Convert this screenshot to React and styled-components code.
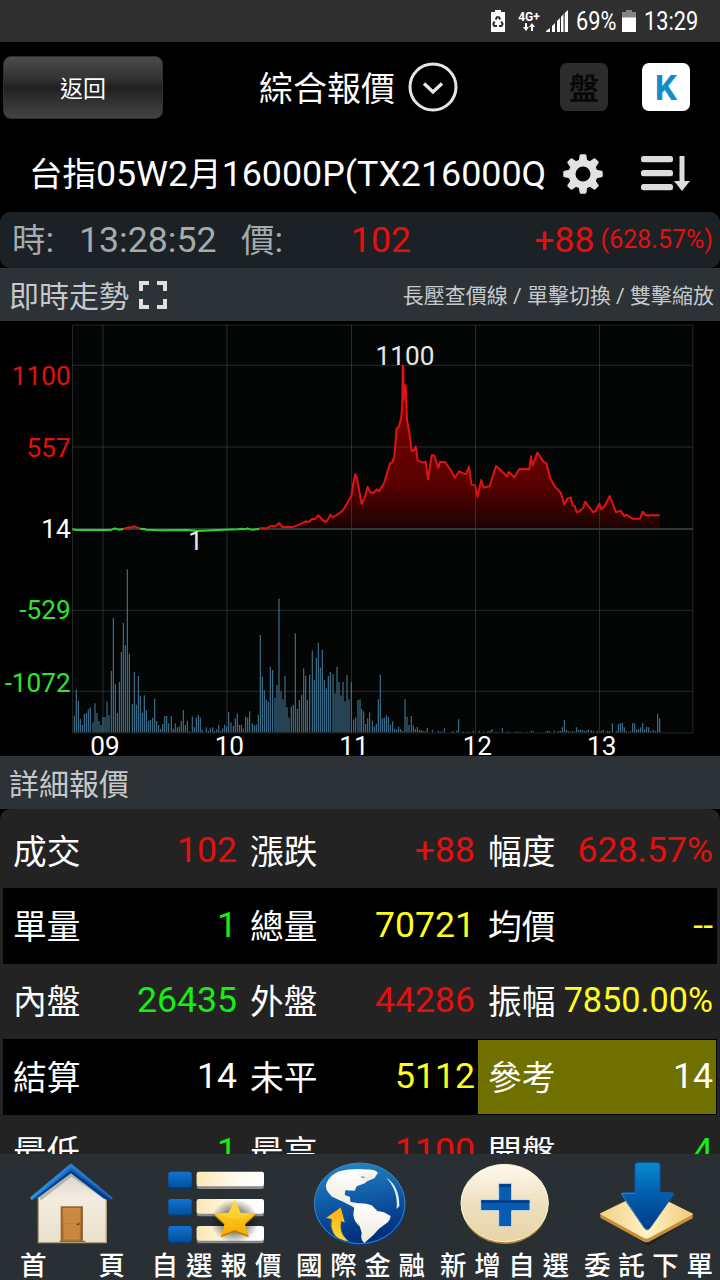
import styled, { createGlobalStyle } from 'styled-components';

const RED = '#e60f0f';
const GREEN = '#14f014';
const YELLOW = '#ffff1e';
const WHITE = '#fff';

const detailRows = [
    [['成交', '102', RED], ['漲跌', '+88', RED], ['幅度', '628.57%', RED]],
    [['單量', '1', GREEN], ['總量', '70721', YELLOW], ['均價', '--', YELLOW]],
    [['內盤', '26435', GREEN], ['外盤', '44286', RED], ['振幅', '7850.00%', YELLOW]],
    [['結算', '14', WHITE], ['未平', '5112', YELLOW], ['參考', '14', WHITE, true]],
    [['最低', '1', GREEN], ['最高', '1100', RED], ['開盤', '4', GREEN]],
];

// Chart units: three per pixel.
const priceAxis = [
    ['1100', 192, RED],
    ['557', 408, RED],
    ['14', 651, WHITE],
    ['-529', 894, '#2ce62c'],
    ['-1072', 1112, '#2ce62c'],
];
const hourAxis = [['09', 315], ['10', 688], ['11', 1062], ['12', 1432], ['13', 1805]];
const gridColumns = [309, 681, 1054.5, 1426.5, 1798.5];
const gridRows = [133, 378, 868, 1111];

const openLine = '217,628 230,630 320,630 335,629 345,625 357,629 370,627';
const earlyRise = '370,627 385,622 394,623 402,619 410,622 420,625';
const morningLine = '420,626 432,627 440,629 460,630 480,631 560,630 595,633 650,630 715,628 725,626 732,628 742,625 755,629 778,627';
const rally =
    '778,625 800,625 812,618 826,619 837,609 848,622 863,620 875,622 900,613 917,604 927,606 937,596 944,598 955,586 965,597 973,605 981,603 991,584 998,592 1015,582 1030,570 1045,543 1054,527 1060,490 1066,462 1071,475 1080,525 ' +
    '1085,552 1095,530 1103,500 1110,517 1120,519 1130,508 1137,514 1152,490 1170,430 1177,427 1183,410 1190,325 1197,320 1204,290 1207,250 1208,137 1210,137 1211,240 1214,195 1217,197 1221,300 1229,345 1235,393 1241,392 1247,380 1253,421 1270,428 1277,425 1284,478 1295,406 1302,406 1315,443 1320,426 1335,426 1352,450 1365,473 1377,454 1398,463 1407,440 1414,493 1426,497 1432,530 1444,480 1451,503 1469,498 1488,438 1510,458 1520,470 1526,456 1543,472 1558,447 1588,448 1593,409 1598,437 1612,398 1630,425 1639,430 1651,475 1665,500 1682,518 1693,553 1702,536 1712,532 1718,556 1724,558 1730,577 1740,573 1750,563 1755,545 1780,577 1788,572 1798,551 1804,568 1816,555 1829,528 1848,577 1862,572 1873,589 1878,584 1898,596 1920,596 1928,575 1938,586 1979,586';

const VOLUME_BASE = 547;
const volumeTops =
    '223:497 229:418 235:453 241:507 247:525 253:492 259:489 265:478 271:472 279:517 285:460 291:489 297:513 303:525 309:501 315:501 321:455 327:495 334:363 340:204 346:402 352:489 358:396 364:306 370:219 376:286 382:58 388:312 397:462 403:366 409:464 415:378 421:437 427:488 433:436 439:480 445:513 451:510 458:503 464:446 470:513 476:525 482:537 488:522 494:498 500:498 506:520 514:498 520:536 526:520 532:532 538:530 544:513 550:480 556:525 562:512 568:543 577:500 583:532 589:503 595:495 601:503 607:540 619:532 625:542 631:535 638:532 644:543 650:538 656:524 662:543 668:535 674:525 680:530 686:486 693:517 700:528 706:505 712:490 718:525 724:525 730:535 737:500 743:503 749:484 757:520 763:526 769:524 775:494 ' +
    '781:255 787:380 793:420 799:448 805:455 811:350 818:360 825:443 831:405 837:146 843:424 849:448 855:378 861:472 867:503 874:470 880:465 886:250 892:477 898:450 905:435 911:355 917:378 922:450 929:374 937:302 943:390 949:324 955:278 961:352 967:300 973:390 979:415 985:378 991:366 999:372 1005:430 1011:350 1017:396 1023:436 1029:396 1035:454 1041:375 1047:448 1054:396 1061:508 1067:503 1074:450 1080:448 1085:477 1091:484 1097:522 1103:505 1109:487 1117:512 1123:529 1129:521 1135:448 1141:374 1147:505 1153:503 1159:495 1165:501 1171:524 1178:514 1184:536 1190:538 1196:530 1202:537 1208:543 1215:448 1221:500 1227:525 1234:498 1240:526 1246:537 1252:531 1258:540 1264:540 1270:543 1276:543 1282:534 ' +
    '1297:540 1315:543 1321:545 1327:545 1333:535 1358:543 1370:542 1376:508 1390:545 1405:545 1420:542 1438:543 1452:545 1464:543 1470:543 1476:537 1488:545 1507:534 1520:545 1526:545 1545:545 1551:545 1557:545 1563:545 1580:545 1594:542 1600:544 1638:544 1643:543 1648:543 1663:542 1675:543 1681:543 1687:532 1693:510 1699:540 1705:543 1712:545 1718:543 1724:545 1730:532 1736:540 1742:540 1748:540 1754:543 1760:542 1766:538 1774:541 1780:543 1792:543 1804:543 1810:540 1822:543 1828:543 1837:520 1849:543 1855:522 1861:519 1867:519 1873:532 1879:543 1891:543 1898:519 1904:520 1910:538 1916:538 1922:532 1928:519 1934:538 1940:531 1946:532 1952:543 1960:540 1966:543 1973:492 1979:505';
const volumes = volumeTops.split(' ').map(bar => bar.split(':').map(Number));

const BatterySaverIcon = () => (
    <svg width="16" height="22" viewBox="0 0 16 22">
        <path d="M1 2h4V0h6v2h4v20H1z" fill="#fff" />
        <g fill="none" stroke="#2f2f2f" strokeWidth="2">
            <path d="M5.6 9.6 7 7.2h2l1.3 2.2" />
            <path d="M11.3 11.4 12.6 14l-1 1.9H9" />
            <path d="M7 15.9H4.2L3.3 14l1.3-2.4" />
        </g>
    </svg>
);

const DataArrowsIcon = () => (
    <svg width="12" height="8" viewBox="0 0 12 8">
        <path d="M2 0h2v4h2L3 8 0 4h2zM8 8V4H6l3-4 3 4h-2v4z" fill="#fff" />
    </svg>
);

const SignalIcon = () => (
    <svg width="22" height="22" viewBox="0 0 22 22">
        <path d="M0 22v-1l4-3v4zM6 22v-6l3-3v9zM11 22V11l3-3v14zM15 22V7l2.500-3v18zM18.700 22V3L22 0v22z" fill="#fff" />
    </svg>
);

const BatteryIcon = () => (
    <svg width="14" height="22" viewBox="0 0 14 22">
        <path d="M0 2h4V0h6v2h4v6H0z" fill="#858585" />
        <path d="M0 7.500h14V22H0z" fill="#fff" />
    </svg>
);

const DropdownIcon = () => (
    <svg width="50" height="50" viewBox="0 0 50 50" fill="none" stroke="#e6e6e6">
        <circle cx="25" cy="25" r="23" strokeWidth="3" />
        <path d="m16 21.500 9 8.500 9-8.500" strokeWidth="3.400" />
    </svg>
);

const GearIcon = () => (
    <svg width="40" height="40" viewBox="-20 -20 40 40">
        <circle r="11" fill="none" stroke="#e2e2e2" strokeWidth="7" />
        {[0, 45, 90, 135, 180, 225, 270, 315].map(angle => (
            <path key={angle} d="M-4.500-12-3.300-18.700Q-3-19.700-2-19.700H2Q3-19.700 3.300-18.700L4.500-12z" fill="#e2e2e2" transform={`rotate(${angle})`} />
        ))}
    </svg>
);

const SortIcon = () => (
    <svg width="50" height="36" viewBox="0 0 50 36" fill="#dcdcdc">
        <rect y="0" width="32" height="6.200" rx="2.500" />
        <rect y="14" width="32" height="6.200" rx="2.500" />
        <rect y="28" width="32" height="6.200" rx="2.500" />
        <path d="M38.500 0h5v25H49l-8 10-8-10h5.500z" />
    </svg>
);

const ExpandIcon = () => (
    <svg width="28" height="28" viewBox="0 0 28 28" fill="none" stroke="#dedede" strokeWidth="4">
        <path d="M2 10V2h8M18 2h8v8M26 18v8h-8M10 26H2v-8" />
    </svg>
);

const HomeIcon = () => (
    <NavIcon viewBox="0 132 432 294">
        <defs>
            <linearGradient id="roof" x2="1"><stop stopColor="#2487db" /><stop offset=".5" stopColor="#1268bd" /><stop offset="1" stopColor="#033e8d" /></linearGradient>
            <linearGradient id="wall" x2="0" y2="1"><stop stopColor="#d6d1c9" /><stop offset=".4" stopColor="#f4ece0" /><stop offset="1" stopColor="#e9e0cc" /></linearGradient>
            <linearGradient id="door" x2="0" y2="1"><stop stopColor="#c98a45" /><stop offset="1" stopColor="#b2702a" /></linearGradient>
        </defs>
        <path d="M115 262 213 180l106 82v136H115z" fill="url(#wall)" stroke="#a99e80" strokeWidth="4" />
        <path d="M122 272 214 200l98 66v-20l-98-68-98 74z" fill="#948e84" opacity=".55" />
        <path d="m213 160 125 103-8 9-18-6-99-76-100 75-20 6-2-9z" fill="url(#roof)" />
        <path d="m213 160 125 103-2 6-123-97-119 96-3-6z" fill="#4b9ae0" opacity=".45" />
        <path d="m213 181 117 89-9-1-108-80-108 79-8 1z" fill="#003a83" />
        <path d="M182 289h66v103h8v4h-77v-4h3z" fill="#9b642f" />
        <path d="M188 294h54v98h-54z" fill="url(#door)" />
        <path d="M193 300h45v38h-45zM193 343h45v44h-45z" fill="#c8883f" stroke="#d09450" strokeWidth="1.500" />
        <path d="M246 289v103" stroke="#80501f" strokeWidth="3" />
        <circle cx="234" cy="341" r="5" fill="#774719" /><circle cx="233" cy="339" r="2" fill="#f5d18d" />
    </NavIcon>
);

const WatchlistIcon = () => (
    <NavIcon viewBox="432 132 432 294">
        <defs>
            <linearGradient id="tile" x2="0" y2="1"><stop stopColor="#1274cf" /><stop offset="1" stopColor="#044f9f" /></linearGradient>
            <linearGradient id="bar" x2="1"><stop stopColor="#fbe7b4" /><stop offset=".6" stopColor="#fffaf0" /><stop offset="1" stopColor="#fff" /></linearGradient>
            <linearGradient id="star" x2="0" y2="1"><stop stopColor="#ffdc37" /><stop offset="1" stopColor="#f7a900" /></linearGradient>
            <radialGradient id="starShadow"><stop offset=".5" stopOpacity=".45" /><stop offset="1" stopOpacity="0" /></radialGradient>
        </defs>
        {[185, 267, 348].map(y => (
            <g key={y}>
                <rect x="505" y={y} width="70" height="52" rx="8" fill="#023a7b" />
                <rect x="505" y={y} width="70" height="47" rx="8" fill="url(#tile)" />
                <rect x="590" y={y + 2} width="202" height="50" rx="7" fill="#898989" />
                <rect x="590" y={y} width="202" height="44" rx="7" fill="url(#bar)" />
            </g>
        ))}
        <ellipse cx="704" cy="334" rx="72" ry="66" fill="url(#starShadow)" />
        <path d="m704 274 18 39 45 3-33 30 12 36-42-17-41 17 11-36-33-30 45-3z" fill="#b97900" />
        <path d="m704 269 18 39 45 3-33 30 12 36-42-17-41 17 11-36-33-30 45-3z" fill="url(#star)" />
        <path d="m704 269 18 39 45 3-62 17-64-17 45-3z" fill="#ffe14e" opacity=".35" />
    </NavIcon>
);

const GlobeIcon = () => (
    <NavIcon viewBox="864 132 432 294">
        <defs>
            <linearGradient id="ocean" x2=".2" y2="1"><stop stopColor="#2789c8" /><stop offset=".45" stopColor="#1261aa" /><stop offset="1" stopColor="#002f7e" /></linearGradient>
            <linearGradient id="land" x2="0" y2="1"><stop stopColor="#fff" /><stop offset="1" stopColor="#eee9dc" /></linearGradient>
            <linearGradient id="turn" x2="0" y2="1"><stop stopColor="#ffad11" /><stop offset="1" stopColor="#ffda31" /></linearGradient>
        </defs>
        <ellipse cx="1080" cy="284" rx="138" ry="122" fill="#073d86" />
        <ellipse cx="1079" cy="280" rx="136" ry="121" fill="url(#ocean)" stroke="#3787c0" strokeWidth="3" />
        <path d="M1018 184q40-10 86-5l-17 12-5 11 29 4-17 14-24 9-6 13-28-1-2 14 16 6 1 14 24 5 7 8-8 12-20-12-28-14-30-14-12-14q-10-14-4-28 12-24 38-34z" fill="url(#land)" />
        <path d="M1096 179q26-3 38 9l-11 17-22 9-14-4 8-9-20-3 7-12z" fill="url(#land)" />
        <path d="M1064 281q28-4 51 5 10 10 17 17l20 4 20 11q-2 16-17 25l-18 13-17 19-27 24q-13-11-8-31l-6-19q-17-14-19-35z" fill="url(#land)" />
        <path d="M1158 202q41 28 40 86l-8 9q5-55-32-95z" fill="#def0f7" />
        <path d="m1023 290 13 49-12-4q-4 27 8 43 8 13 20 18-42-4-53-27-10-18-5-41l-19-3z" fill="url(#turn)" stroke="#165691" strokeWidth="3" />
    </NavIcon>
);

const AddIcon = () => (
    <NavIcon viewBox="216 132 432 294">
        <defs>
            <linearGradient id="coin" x2="0" y2="1"><stop stopColor="#fffaf0" /><stop offset=".5" stopColor="#eee0bf" /><stop offset="1" stopColor="#e7d4a6" /></linearGradient>
        </defs>
        <ellipse cx="434" cy="284" rx="131" ry="118" fill="#ad8a3d" />
        <ellipse cx="434" cy="279" rx="131" ry="116" fill="url(#coin)" stroke="#f9f3df" strokeWidth="3" />
        <path d="M416 220h39v49h55v33h-55v48h-39v-48h-54v-33h54z" fill="#085bb2" stroke="#d2dce0" strokeWidth="3" />
        <path d="M418 223h35v8h-35zM364 271h144v8H364z" fill="#003f8c" />
    </NavIcon>
);

const OrderIcon = () => (
    <NavIcon viewBox="648 132 432 294">
        <defs>
            <linearGradient id="tray" x2="1"><stop stopColor="#f0cf83" /><stop offset=".5" stopColor="#fff1c4" /><stop offset="1" stopColor="#f0cb78" /></linearGradient>
            <linearGradient id="arrow" x2="0" y2="1"><stop stopColor="#078bd0" /><stop offset=".4" stopColor="#0263b3" /><stop offset="1" stopColor="#003b87" /></linearGradient>
        </defs>
        <path d="M722 318 860 394l142-74-137 88z" fill="#171b1d" opacity=".7" />
        <path d="m721 311 139-68 138 69v13l-130 70q-8 4-17 0L721 323z" fill="#c2903d" />
        <path d="m721 311 139-68 138 69-130 71q-8 3-17 0z" fill="url(#tray)" stroke="#f9df9d" strokeWidth="2" />
        <path d="M825 166q0-8 8-8h58q9 0 9 8v82h35q9 0 4 8l-69 98q-8 11-17 0l-67-98q-5-8 5-8h34z" fill="url(#arrow)" stroke="#15589b" strokeWidth="3" />
        <path d="m827 250-42 1 68 103q8 9 16 1" fill="none" stroke="#69a1c6" strokeWidth="2" opacity=".7" />
    </NavIcon>
);

const navItems = [
    ['首頁', HomeIcon, 105],
    ['自選報價', WatchlistIcon, 130],
    ['國際金融', GlobeIcon, 129],
    ['新增自選', AddIcon, 129],
    ['委託下單', OrderIcon, 129],
];

const TrendChart = () => (
    <Chart viewBox="0 0 2160 1305">
        <defs>
            <linearGradient id="fall" gradientUnits="userSpaceOnUse" x1="0" y1="137" x2="0" y2="624">
                <stop stopColor="#850000" />
                <stop offset=".72" stopColor="#5a0000" />
                <stop offset="1" stopColor="#1d0303" />
            </linearGradient>
        </defs>
        <rect x="217.500" y="12" width="1861" height="1224" fill="#040606" stroke="#222626" strokeWidth="3" />
        <g transform="translate(0 -3)">
            <polygon points={`778,624 ${rally} 1979,624`} fill="url(#fall)" />
        </g>
        <g stroke="#8c9696" strokeOpacity=".25" strokeWidth="3">
            {gridColumns.map(x => <path key={x} d={`M${x} 12V1236`} />)}
            {gridRows.map(y => <path key={y} d={`M217 ${y}H2079`} />)}
        </g>
        <path d="M217 624H2079" stroke="#3d474f" strokeWidth="5" />
        <g transform="translate(0 -3)" fill="none" strokeWidth="6" strokeLinejoin="round">
            <polyline points={openLine} stroke="#28d828" />
            <polyline points={earlyRise} stroke="#dc1818" />
            <polyline points={morningLine} stroke="#28d828" />
            <polyline points={rally} stroke="#e01212" />
        </g>
        <g transform="translate(0 687)" fill="#40728f">
            {volumes.map(([x, top]) => (
                <rect key={x} x={x - 1.7} y={top} width="3.400" height={VOLUME_BASE - top} />
            ))}
        </g>
        <AxisText x="1215" y="132" textAnchor="middle" fill="#e8e8e8">1100</AxisText>
        <AxisText x="587" y="686" textAnchor="middle" fill="#e8e8e8">1</AxisText>
        {priceAxis.map(([label, y, color]) => (
            <AxisText key={label} x="212" y={y} textAnchor="end" fill={color}>{label}</AxisText>
        ))}
        {hourAxis.map(([label, x]) => (
            <AxisText key={label} x={x} y="1301" textAnchor="middle" fill="#fff">{label}</AxisText>
        ))}
    </Chart>
);

const App = () => (
    <>
        <GlobalStyle />
        <Screen>
            <StatusBar>
                <BatterySaverIcon />
                <Network>
                    <span>4G+</span>
                    <DataArrowsIcon />
                </Network>
                <SignalIcon />
                <StatusText width="40px">69%</StatusText>
                <BatteryIcon />
                <StatusText width="56px">13:29</StatusText>
            </StatusBar>

            <Header>
                <BackButton>返回</BackButton>
                <Title>綜合報價</Title>
                <DropdownIcon />
                <Tools>
                    <SquareButton>盤</SquareButton>
                    <SquareButton $active>K</SquareButton>
                </Tools>
            </Header>

            <ProductBar>
                <ProductName>
                    <Han>台指</Han>05W2<Han>月</Han>16000P(TX216000Q
                </ProductName>
                <GearIcon />
                <SortIcon />
            </ProductBar>

            <QuoteBar>
                <QuoteLabel width="67px"><Han>時</Han>:</QuoteLabel>
                <QuoteLabel width="162px">13:28:52</QuoteLabel>
                <QuoteLabel width="49px"><Han>價</Han>:</QuoteLabel>
                <Price>102</Price>
                <Change>+88</Change>
                <Percent>(628.57%)</Percent>
            </QuoteBar>

            <SectionHeader>
                <span>即時走勢</span>
                <ExpandIcon />
                <Hint>長壓查價線 / 單擊切換 / 雙擊縮放</Hint>
            </SectionHeader>
            <TrendChart />
            <SectionHeader>
                <span>詳細報價</span>
            </SectionHeader>

            <Details>
                {detailRows.map((row, i) => (
                    <DetailRow key={row[0][0]} $dark={i % 2 === 1} $first={i === 0}>
                        {row.map(([label, value, color, highlighted]) => (
                            <Cell key={label} $highlighted={highlighted}>
                                <CellLabel>{label}</CellLabel>
                                <CellValue color={color} $long={value.length > 7}>{value}</CellValue>
                            </Cell>
                        ))}
                    </DetailRow>
                ))}
            </Details>

            <NavBar>
                {navItems.map(([label, Icon, width]) => (
                    <NavItem key={label}>
                        <Icon />
                        <NavLabel width={`${width}px`}>
                            {[...label].map(char => <span key={char}>{char}</span>)}
                        </NavLabel>
                    </NavItem>
                ))}
            </NavBar>
        </Screen>
    </>
);

const GlobalStyle = createGlobalStyle`
  * {
    box-sizing: border-box;
  }

  body {
    margin: 0;
    background: #000;
  }
`;

const Screen = styled.div`
  width: 720px;
  height: 1280px;
  overflow: hidden;
  display: flex;
  flex-direction: column;
  background: #000;
  color: #fff;
  font-family: Roboto, 'Noto Sans CJK TC', sans-serif;
  white-space: nowrap;

  svg {
    display: block;
    flex: none;
  }
`;

const Han = styled.span`
  font-size: 33.500px;
  line-height: 1;
`;

const StatusBar = styled.div`
  flex: none;
  height: 42px;
  padding-left: 490px;
  display: flex;
  align-items: center;
  background: #2f2f2f;
`;

const Network = styled.div`
  width: 24px;
  margin: 0 5px 0 11px;
  display: flex;
  flex-direction: column;
  align-items: center;
  font-size: 12px;
  line-height: 12px;
  font-weight: bold;
`;

const StatusText = styled.span`
  width: ${props => props.width};
  margin: 2px 6px 0 8px;
  font-size: 25px;
  line-height: 30px;
  transform: scaleX(0.87);
  transform-origin: left;
`;

const Header = styled.div`
  flex: none;
  height: 90px;
  display: flex;
  align-items: center;
`;

const BackButton = styled.button`
  width: 160px;
  height: 63px;
  margin: 0 96px 0 3px;
  padding: 5px 0 0;
  border: 1px solid #303030;
  border-radius: 8px;
  background: linear-gradient(#4c4c4c, #333 35%, #202020 50%, #333 75%, #434343);
  color: #fff;
  font: 23px/30px Roboto, 'Noto Sans CJK TC', sans-serif;
`;

const Title = styled.span`
  width: 149px;
  padding-bottom: 1px;
  font-size: 34px;
`;

const Tools = styled.div`
  margin-left: 102px;
  display: flex;
  gap: 34px;
`;

const SquareButton = styled.div`
  width: 48px;
  height: 48px;
  padding-top: ${props => (props.$active ? '2px' : '0')};
  padding-bottom: ${props => (props.$active ? '0' : '3px')};
  display: flex;
  align-items: center;
  justify-content: center;
  border-radius: 7px;
  background: ${props => (props.$active ? '#fff' : '#2c2c2c')};
  color: ${props => (props.$active ? '#168bcb' : '#080808')};
  font-size: ${props => (props.$active ? '35px' : '30px')};
  font-weight: bold;
`;

const ProductBar = styled.div`
  flex: none;
  height: 80px;
  padding: 3px 0 0 29px;
  display: flex;
  align-items: center;
`;

const ProductName = styled.span`
  width: 534px;
  font-size: 35.800px;

  & + svg {
    margin-right: 38px;
  }
`;

const QuoteBar = styled.div`
  flex: none;
  height: 56px;
  padding: 0 7px 0 12px;
  display: flex;
  align-items: center;
  border-radius: 10px;
  background: #1b2125;
  color: ${RED};
  font-size: 35.700px;
`;

const QuoteLabel = styled.span`
  width: ${props => props.width};
  line-height: 42px;
  color: #a4abae;
`;

const Price = styled.span`
  width: 121px;
  text-align: right;
`;

const Change = styled.span`
  margin-left: auto;
`;

const Percent = styled.span`
  margin-left: 6px;
  padding-bottom: 2px;
  font-size: 25px;
`;

const SectionHeader = styled.div`
  flex: none;
  height: 53px;
  padding: 0 6px 0 9px;
  display: flex;
  align-items: center;
  gap: 10px;
  background: #2d3236;
  color: #c5c9cb;
  font-size: 30px;

  span {
    padding-bottom: 2px;
  }
`;

const Hint = styled.span`
  margin-left: auto;
  font-size: 21px;
`;

const Chart = styled.svg`
  width: 720px;
  height: 435px;
  overflow: visible;
`;

const AxisText = styled.text`
  font-size: 78.500px;
`;

const Details = styled.div`
  flex: 1;
  min-height: 0;
  overflow: hidden;
  padding: 0 3px;
  border-radius: 10px 10px 0 0;
  background: #232323;
`;

const DetailRow = styled.div`
  height: ${props => (props.$first ? '79px' : '75.500px')};
  padding-top: ${props => (props.$first ? '4px' : '0')};
  display: grid;
  grid-template-columns: 237px 238px 238px;
  background: ${props => (props.$dark ? '#000' : 'transparent')};
`;

const Cell = styled.div`
  margin: 1px 0;
  padding: 0 3px 2px 10px;
  display: flex;
  align-items: center;
  justify-content: space-between;
  background: ${props => (props.$highlighted ? '#707000' : 'transparent')};
`;

const CellLabel = styled.span`
  padding-bottom: 1px;
  font-size: 33.700px;
`;

const CellValue = styled.span`
  color: ${props => props.color};
  font-size: ${props => (props.$long ? '34.200px' : '35.600px')};
`;

const NavBar = styled.div`
  flex: none;
  height: 126px;
  display: flex;
  background: #2a2f33;
`;

const NavItem = styled.div`
  width: 144px;
  display: flex;
  flex-direction: column;
  align-items: center;
`;

const NavIcon = styled.svg`
  width: 144px;
  height: 98px;
`;

const NavLabel = styled.div`
  width: ${props => props.width};
  margin-left: 1px;
  display: flex;
  justify-content: space-between;
  font-size: 26.500px;
  line-height: 28px;
  font-weight: 500;
`;

export default App;
